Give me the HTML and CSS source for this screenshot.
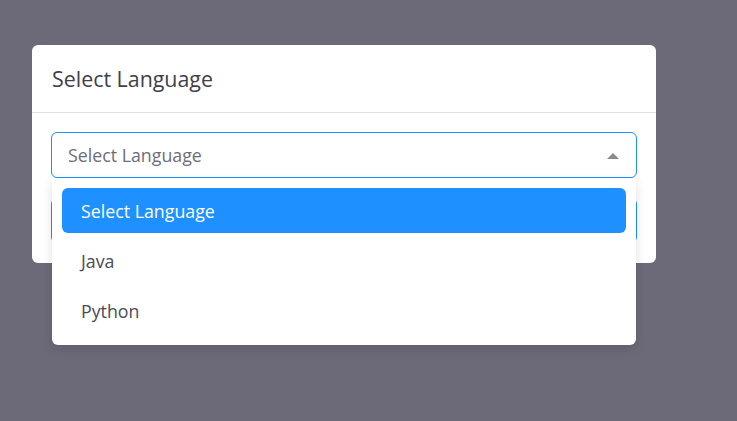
FILE: index.html
```html
<!DOCTYPE html>
<html lang="en">
<head>
<meta charset="utf-8">
<title>Select Language</title>
<link rel="stylesheet" href="styles.css">
</head>
<body>
<div class="modal">
  <div class="modal-header">
    <h2 class="modal-title">Select Language</h2>
  </div>
  <div class="modal-body">
    <div class="select">
      <div class="select-box">
        <span class="placeholder">Select Language</span>
        <span class="arrow"></span>
      </div>
      <ul class="dropdown">
        <li class="option selected">Select Language</li>
        <li class="option">Java</li>
        <li class="option">Python</li>
      </ul>
    </div>
    <button class="btn">Submit</button>
  </div>
</div>
</body>
</html>
```
FILE: styles.css
```css
* { box-sizing: border-box; }
html, body { margin: 0; padding: 0; }
body {
  width: 737px;
  height: 421px;
  background: #6c6a78;
  font-family: "Open Sans", "Noto Sans", sans-serif;
  padding: 45px 0 0 32px;
  overflow: hidden;
}
.modal {
  width: 624px;
  background: #fff;
  border-radius: 6px;
}
.modal-header {
  height: 68px;
  border-bottom: 1px solid #e1e1e4;
  padding: 0 20px;
  display: flex;
  align-items: center;
}
.modal-title {
  margin: 0;
  font-size: 21.4px;
  font-weight: 400;
  color: #40404c;
  padding-bottom: 1px;
}
.modal-body {
  padding: 19px 19px 20px;
  display: flex;
  flex-direction: column;
  gap: 20px;
}
.select { position: relative; }
.select-box {
  height: 46px;
  border: 1px solid #1e90ff;
  border-radius: 6px;
  display: flex;
  align-items: center;
  justify-content: space-between;
  padding: 0 17px 0 16px;
}
.placeholder {
  font-size: 17.8px;
  color: #6e6e78;
}
.arrow {
  width: 0;
  height: 0;
  border-left: 6px solid transparent;
  border-right: 6px solid transparent;
  border-bottom: 6px solid #8a8a92;
  margin-top: 1px;
}
.dropdown {
  position: absolute;
  top: 100%;
  left: 1px;
  right: 1px;
  margin: 0;
  padding: 10px 10px 12px;
  list-style: none;
  background: #fff;
  border-radius: 0 0 6px 6px;
  box-shadow: 0 4px 12px rgba(0, 0, 0, 0.12);
  display: flex;
  flex-direction: column;
  gap: 5px;
  z-index: 2;
}
.option {
  height: 45px;
  display: flex;
  align-items: center;
  padding: 0 19px;
  font-size: 17.8px;
  color: #4a4a56;
  border-radius: 6px;
}
.option.selected {
  background: #1e90ff;
  color: #fff;
}
.btn {
  height: 45px;
  border: none;
  border-radius: 6px;
  background: #1e90ff;
  color: #fff;
  font-family: inherit;
  font-size: 17px;
}
```
